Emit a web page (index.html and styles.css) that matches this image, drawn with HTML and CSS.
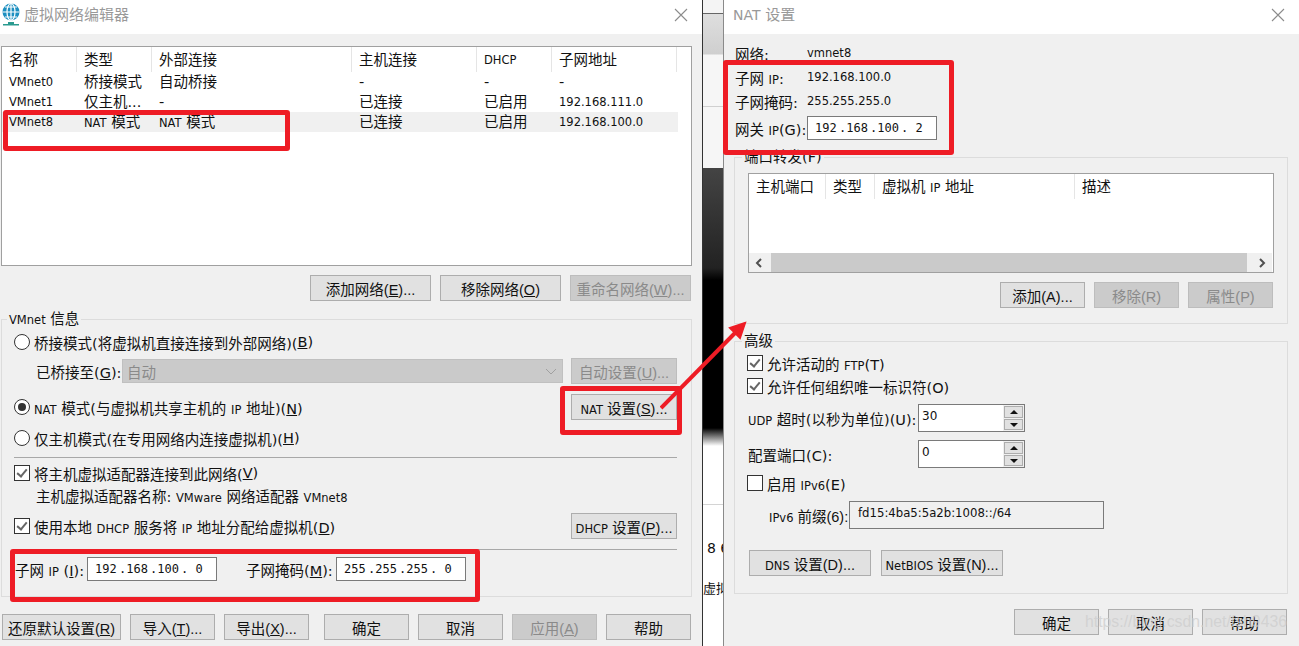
FILE: index.html
```html
<!DOCTYPE html>
<html lang="zh-CN">
<head>
    <meta charset="UTF-8">
    <title>虚拟网络编辑器</title>
    <link rel="stylesheet" href="styles.css">
</head>
<body>

    <div class="backdrop">
        <div class="backdrop-grey"></div>
        <div class="backdrop-black"></div>
        <div class="backdrop-white">
            <span class="backdrop-num">8 6</span>
            <span class="backdrop-text">虚拟</span>
        </div>
    </div>

    <!-- left dialog -->
    <div class="window win-left">
        <div class="titlebar">
            <svg class="app-icon" width="20" height="24" viewBox="0 0 20 24">
                <circle cx="10" cy="10" r="8.5" fill="#1d8fc0"/>
                <path d="M1.5 10h17M10 1.5v17M4 5h12M4 15h12" stroke="#fff" stroke-width="1.2" fill="none"/>
                <ellipse cx="10" cy="10" rx="4" ry="8.5" stroke="#fff" stroke-width="1.2" fill="none"/>
                <path d="M7 20h6v2H7zM2 22h16v1.5H2z" fill="#2a9a8f"/>
            </svg>
            <span class="title">虚拟网络编辑器</span>
            <svg class="close" width="14" height="14" viewBox="0 0 14 14"><path d="M1 1l12 12M13 1L1 13" stroke="#8c8c8c" stroke-width="1.1"/></svg>
        </div>
        <div class="body">
            <div class="listbox net-list">
                <div class="row head">
                    <span class="c1">名称</span><span class="c2">类型</span><span class="c3">外部连接</span><span class="c4">主机连接</span><span class="c5 small">DHCP</span><span class="c6">子网地址</span>
                </div>
                <div class="row">
                    <span class="c1 small">VMnet0</span><span class="c2">桥接模式</span><span class="c3">自动桥接</span><span class="c4">-</span><span class="c5">-</span><span class="c6">-</span>
                </div>
                <div class="row">
                    <span class="c1 small">VMnet1</span><span class="c2">仅主机...</span><span class="c3">-</span><span class="c4">已连接</span><span class="c5">已启用</span><span class="c6 small">192.168.111.0</span>
                </div>
                <div class="row selected">
                    <span class="c1 small">VMnet8</span><span class="c2"><em class="small">NAT</em> 模式</span><span class="c3"><em class="small">NAT</em> 模式</span><span class="c4">已连接</span><span class="c5">已启用</span><span class="c6 small">192.168.100.0</span>
                </div>
            </div>

            <div class="btn-row net-btns">
                <button class="btn w120">添加网络(<u>E</u>)...</button>
                <button class="btn w120">移除网络(<u>O</u>)</button>
                <button class="btn w120 off">重命名网络(<u>W</u>)...</button>
            </div>

            <fieldset class="group vm-group">
                <legend><em class="small">VMnet</em> 信息</legend>
                <div class="opt opt-bridge"><i class="radio"></i>桥接模式(将虚拟机直接连接到外部网络)(<u>B</u>)</div>
                <div class="line bridge-line">
                    <span class="bridge-label">已桥接至(<u>G</u>):</span>
                    <div class="select"><span>自动</span>
                        <svg width="12" height="7" viewBox="0 0 12 7"><path d="M1 1l5 5 5-5" stroke="#a0a0a0" fill="none"/></svg>
                    </div>
                    <button class="btn w106 off">自动设置(<u>U</u>)...</button>
                </div>
                <div class="line nat-line">
                    <div class="opt"><i class="radio on"></i><span><em class="small">NAT</em> 模式(与虚拟机共享主机的 <em class="small">IP</em> 地址)(<u>N</u>)</span></div>
                    <button class="btn w106"><em class="small">NAT</em> 设置(<u>S</u>)...</button>
                </div>
                <div class="opt opt-host"><i class="radio"></i>仅主机模式(在专用网络内连接虚拟机)(<u>H</u>)</div>
                <hr class="sep sep1">
                <div class="opt opt-adapter"><i class="check on"></i>将主机虚拟适配器连接到此网络(<u>V</u>)</div>
                <div class="adapter-name">主机虚拟适配器名称: <em class="small">VMware</em> 网络适配器 <em class="small">VMnet8</em></div>
                <div class="line dhcp-line">
                    <div class="opt"><i class="check on"></i><span>使用本地 <em class="small">DHCP</em> 服务将 <em class="small">IP</em> 地址分配给虚拟机(<u>D</u>)</span></div>
                    <button class="btn w106"><em class="small">DHCP</em> 设置(<u>P</u>)...</button>
                </div>
                <hr class="sep sep2">
                <div class="line subnet-line">
                    <span class="subnet-label">子网 <em class="small">IP</em> (<u>I</u>):</span>
                    <div class="ip"><span>192</span><span>.168</span><span>.100</span><span>. 0</span></div>
                    <span class="mask-label">子网掩码(<u>M</u>):</span>
                    <div class="ip"><span>255</span><span>.255</span><span>.255</span><span>. 0</span></div>
                </div>
            </fieldset>

            <div class="btn-row foot-btns">
                <button class="btn restore">还原默认设置(<u>R</u>)</button>
                <button class="btn w85">导入(<u>T</u>)...</button>
                <button class="btn w85">导出(<u>X</u>)...</button>
                <button class="btn w85 ok">确定</button>
                <button class="btn w85">取消</button>
                <button class="btn w85 off">应用(<u>A</u>)</button>
                <button class="btn w85">帮助</button>
            </div>
        </div>
    </div>

    <!-- right dialog -->
    <div class="window win-right">
        <div class="titlebar">
            <span class="title title-nat"><em class="title-latin">NAT</em> 设置</span>
            <svg class="close" width="14" height="14" viewBox="0 0 14 14"><path d="M1 1l12 12M13 1L1 13" stroke="#8c8c8c" stroke-width="1.1"/></svg>
        </div>
        <div class="body body-nat">
            <div class="info"><span class="info-key">网络:</span><span class="small">vmnet8</span></div>
            <div class="info"><span class="info-key">子网 <em class="small">IP</em>:</span><span class="small">192.168.100.0</span></div>
            <div class="info"><span class="info-key">子网掩码:</span><span class="small">255.255.255.0</span></div>
            <div class="info gateway"><span class="info-key">网关 <em class="small">IP</em>(G):</span>
                <div class="ip"><span>192</span><span>.168</span><span>.100</span><span>. 2</span></div>
            </div>

            <fieldset class="group port-group">
                <legend>端口转发(F)</legend>
                <div class="listbox port-list">
                    <div class="row head port-head">
                        <span class="p1">主机端口</span><span class="p2">类型</span><span class="p3">虚拟机 <em class="small">IP</em> 地址</span><span class="p4">描述</span>
                    </div>
                    <div class="scrollbar">
                        <svg width="8" height="10" viewBox="0 0 8 10"><path d="M6 1L2 5l4 4" stroke="#505050" stroke-width="2" fill="none"/></svg>
                        <div class="thumb"></div>
                        <svg width="8" height="10" viewBox="0 0 8 10"><path d="M2 1l4 4-4 4" stroke="#505050" stroke-width="2" fill="none"/></svg>
                    </div>
                </div>
                <div class="btn-row port-btns">
                    <button class="btn w85">添加(A)...</button>
                    <button class="btn w85 off">移除(R)</button>
                    <button class="btn w85 off">属性(P)</button>
                </div>
            </fieldset>

            <fieldset class="group adv-group">
                <legend>高级</legend>
                <div class="opt opt-ftp"><i class="check on"></i><span>允许活动的 <em class="small">FTP</em>(T)</span></div>
                <div class="opt opt-uid"><i class="check on"></i>允许任何组织唯一标识符(O)</div>
                <div class="line spin-line spin-first">
                    <span class="spin-label"><em class="small">UDP</em> 超时(以秒为单位)(U):</span>
                    <div class="spin"><span class="spin-val">30</span>
                        <div class="spin-btns"><b class="up"></b><b class="down"></b></div>
                    </div>
                </div>
                <div class="line spin-line">
                    <span class="spin-label">配置端口(C):</span>
                    <div class="spin"><span class="spin-val">0</span>
                        <div class="spin-btns"><b class="up"></b><b class="down"></b></div>
                    </div>
                </div>
                <div class="opt opt-v6"><i class="check"></i><span>启用 <em class="small">IPv6</em>(E)</span></div>
                <div class="line v6-line">
                    <span class="v6-label"><em class="small">IPv6</em> 前缀(6):</span>
                    <div class="v6-box">fd15:4ba5:5a2b:1008::/64</div>
                </div>
                <div class="btn-row adv-btns">
                    <button class="btn w122"><em class="small">DNS</em> 设置(D)...</button>
                    <button class="btn w122"><em class="small">NetBIOS</em> 设置(N)...</button>
                </div>
            </fieldset>

            <div class="btn-row nat-foot">
                <button class="btn w85">确定</button>
                <button class="btn w85">取消</button>
                <button class="btn w85">帮助</button>
            </div>
        </div>
    </div>

    <!-- annotations drawn over the screenshot -->
    <div class="mark mark-row"></div>
    <div class="mark mark-nat"></div>
    <div class="mark mark-subnet"></div>
    <div class="mark mark-ip"></div>
    <svg class="arrow" width="100" height="100" viewBox="0 0 100 100">
        <path d="M1 87L75 12" stroke="#ee1c25" stroke-width="4" fill="none"/>
        <path d="M85 2L70 7 80 17z" fill="#ee1c25" stroke="#ee1c25" stroke-width="2"/>
    </svg>
    <div class="watermark">https://blog.csdn.net/fsh9436</div>

</body>
</html>
```
FILE: styles.css
```css
html, body {
    margin: 0;
    padding: 0;
    height: 100%;
    overflow: hidden;
}

body {
    position: relative;
    width: 1299px;
    height: 646px;
    background: #fff;
    font-family: "DejaVu Sans", "Noto Sans CJK SC", sans-serif;
    font-size: 14.5px;
    color: #111;
}

em {
    font-style: normal;
}

u {
    text-underline-offset: 1px;
}

.small {
    font-family: "DejaVu Sans", sans-serif;
    font-size: 11.5px;
}

/* what shows between the two dialogs */
.backdrop {
    position: absolute;
    left: 703px;
    top: 0;
    width: 21px;
    height: 646px;
    display: flex;
    flex-direction: column;
}

.backdrop-grey {
    height: 168px;
    background: linear-gradient(to bottom, #f4f4f4 0, #f4f4f4 13px, #666 13px, #666 14px, #dedede 14px, #cfcfcf 54px, #f6f6f6 55px, #f6f6f6 106px, #d0d0d0 106px, #d0d0d0 107px, #f6f6f6 107px);
}

.backdrop-black {
    height: 278px;
    background: linear-gradient(to bottom, #444 0, #222 100px, #000 112px, #000 260px, #fff 278px);
}

.backdrop-white {
    flex: 1;
    position: relative;
    overflow: hidden;
    background: linear-gradient(to bottom, #fff 0, #fff 58px, #d4d4d4 58px, #d4d4d4 59px, #fff 59px);
}

.backdrop-num {
    position: absolute;
    left: 4px;
    top: 94px;
    font-size: 14px;
    white-space: nowrap;
}

.backdrop-text {
    position: absolute;
    left: 0;
    top: 132px;
    font-size: 13px;
    white-space: nowrap;
}

.window {
    position: absolute;
    top: 0;
    height: 646px;
    display: flex;
    flex-direction: column;
    background: #f0f0f0;
}

.win-left {
    left: 0;
    width: 702px;
    border-right: 1px solid #333;
}

.win-right {
    left: 723px;
    width: 576px;
    border-left: 1px solid #8a8a8a;
    box-sizing: border-box;
}

.titlebar {
    height: 34px;
    flex: none;
    box-sizing: border-box;
    padding-bottom: 7px;
    background: #fff;
    display: flex;
    align-items: center;
    position: relative;
}

.app-icon {
    margin-left: 1px;
    margin-right: 3px;
}

.title {
    font-size: 15px;
    color: #999;
}

.title-nat {
    margin-left: 9px;
}

.title-latin {
    font-size: 14px;
}

.close {
    position: absolute;
    right: 14px;
    top: 8px;
}

.body {
    flex: 1;
    position: relative;
    padding: 12px 0 0 1px;
}

.listbox {
    background: #fff;
    border: 1px solid #a0a0a0;
    box-sizing: border-box;
}

.net-list {
    width: 691px;
    height: 220px;
}

.row {
    display: flex;
    height: 20px;
    line-height: 21px;
    width: 676px;
    white-space: nowrap;
}

.row.head {
    height: 25px;
    line-height: 27px;
}

.row.head > span {
    border-right: 1px solid #e5e5e5;
    height: 25px;
}

.row.selected {
    background: #f0f0f0;
}

.row > span {
    box-sizing: border-box;
    padding-left: 7px;
    flex: none;
}

.c1 { width: 75px; }
.c2 { width: 75px; }
.c3 { width: 200px; }
.c4 { width: 125px; }
.c5 { width: 75px; }
.c6 { width: 125px; }

.btn-row {
    display: flex;
}

.btn {
    height: 26px;
    padding: 0;
    box-sizing: border-box;
    background: #e1e1e1;
    border: 1px solid #adadad;
    font-family: "Liberation Sans", "Noto Sans CJK SC", sans-serif;
    font-size: 14.5px;
    color: #111;
    white-space: nowrap;
    flex: none;
}

.btn.off {
    background: #cbcbcb;
    border-color: #bdbdbd;
    color: #8a8a8a;
}

.w120 { width: 121px; }
.w106 { width: 106px; }
.w85 { width: 85px; }
.w122 { width: 122px; }

.net-btns {
    gap: 9px;
    margin: 9px 0 0 309px;
}

.group {
    margin: 0;
    padding: 0;
    border: 1px solid #dcdcdc;
    box-sizing: border-box;
    position: relative;
}

.group legend {
    padding: 0 2px;
    margin-left: 7px;
    line-height: 16px;
}

.vm-group {
    width: 691px;
    height: 286px;
    margin-top: 10px;
    padding: 0 14px 0 13px;
}

.vm-group legend {
    margin-left: -8px;
}

.adv-group legend {
    margin-left: -6px;
}

.opt {
    display: flex;
    align-items: center;
    height: 20px;
    white-space: nowrap;
}

.radio, .check {
    display: block;
    flex: none;
    box-sizing: border-box;
    width: 16px;
    height: 16px;
    background: #fff;
    border: 1px solid #333;
    margin-left: -1px;
    margin-right: 4px;
    position: relative;
}

.radio {
    border-radius: 50%;
}

.radio.on::after {
    content: "";
    position: absolute;
    left: 3px;
    top: 3px;
    width: 8px;
    height: 8px;
    border-radius: 50%;
    background: #333;
}

.check.on::after {
    content: "";
    position: absolute;
    left: 4px;
    top: 1px;
    width: 4px;
    height: 8px;
    border: solid #666;
    border-width: 0 2px 2px 0;
    transform: rotate(40deg);
}

.line {
    display: flex;
    align-items: center;
    white-space: nowrap;
}

.opt-bridge {
    margin-top: 4px;
}

.bridge-line {
    margin-top: 6px;
    padding-left: 21px;
    height: 26px;
}

.bridge-label {
    width: 86px;
    flex: none;
}

.select {
    width: 441px;
    height: 24px;
    box-sizing: border-box;
    background: #cacaca;
    border: 1px solid #c0c0c0;
    color: #8a8a8a;
    display: flex;
    align-items: center;
    justify-content: space-between;
    padding: 0 5px 0 4px;
    margin-right: 8px;
    flex: none;
}

.nat-line {
    justify-content: space-between;
    margin-top: 10px;
    height: 26px;
}

.opt-host {
    margin-top: 8px;
}

.sep {
    margin: 0 0 0 -1px;
    border: 0;
    height: 1px;
    background: #a8a8a8;
    width: 663px;
}

.sep1 { margin-top: 9px; }

.opt-adapter {
    margin-top: 5px;
}

.adapter-name {
    height: 20px;
    line-height: 20px;
    padding-left: 21px;
    margin-top: 4px;
    white-space: nowrap;
}

.dhcp-line {
    justify-content: space-between;
    margin-top: 6px;
    height: 26px;
}

.sep2 { margin-top: 10px; }

.subnet-line {
    margin-top: 7px;
    height: 24px;
}

.subnet-label {
    width: 72px;
    flex: none;
}

.mask-label {
    margin-left: 29px;
    width: 90px;
    flex: none;
}

.ip {
    box-sizing: border-box;
    width: 130px;
    height: 24px;
    background: #fff;
    border: 1px solid #7a7a7a;
    font-family: "DejaVu Sans Mono", monospace;
    font-size: 12px;
    display: flex;
    align-items: center;
    padding-left: 7px;
    flex: none;
}

.ip span {
    width: 31px;
    flex: none;
    white-space: pre;
}

.ip span:first-child {
    width: 24px;
}

.foot-btns {
    position: absolute;
    left: 2px;
    top: 580px;
    gap: 9px;
}

.restore {
    width: 119px;
}

.foot-btns .ok {
    margin-left: 6px;
}

/* NAT dialog */
.body-nat {
    padding: 0 0 0 11px;
}

.info {
    display: flex;
    align-items: center;
    height: 24px;
}

.info:first-child {
    margin-top: 7px;
}

.info-key {
    width: 72px;
    flex: none;
    white-space: nowrap;
}

.gateway {
    margin-top: 1px;
    height: 28px;
}

.port-group {
    position: absolute;
    left: 10px;
    top: 115px;
    width: 554px;
    height: 175px;
}

.port-list {
    width: 526px;
    height: 100px;
    margin: 8px 0 0 13px;
    position: relative;
}

.port-head {
    width: 420px;
}

.p1 { width: 77px; }
.p2 { width: 49px; }
.p3 { width: 200px; }
.p4 { width: 120px; border-right: 0 !important; }

.scrollbar {
    position: absolute;
    left: 0;
    right: 1px;
    bottom: 0;
    height: 19px;
    background: #f0f0f0;
    display: flex;
    align-items: center;
    justify-content: space-between;
    padding: 0 6px;
    box-sizing: border-box;
}

.thumb {
    position: absolute;
    left: 22px;
    right: 25px;
    top: 0;
    height: 19px;
    background: #cacaca;
}

.port-btns {
    gap: 9px;
    margin: 9px 0 0 265px;
}

.adv-group {
    position: absolute;
    left: 10px;
    top: 299px;
    width: 554px;
    height: 261px;
    padding-left: 13px;
}

.opt-ftp {
    margin-top: 4px;
}

.opt-uid {
    margin-top: 3px;
}

.spin-line {
    height: 28px;
    margin-top: 8px;
}

.spin-first {
    margin-top: 8px;
}

.spin-label {
    width: 170px;
    flex: none;
}

.spin {
    width: 107px;
    height: 28px;
    box-sizing: border-box;
    background: #fff;
    border: 1px solid #7a7a7a;
    display: flex;
    justify-content: space-between;
    flex: none;
}

.spin-val {
    font-family: "DejaVu Sans", sans-serif;
    font-size: 12px;
    padding-left: 3px;
    line-height: 22px;
}

.spin-btns {
    width: 21px;
    background: #f0f0f0;
    display: flex;
    flex-direction: column;
    gap: 1px;
    padding: 1px 1px;
    box-sizing: border-box;
}

.spin-btns b {
    flex: 1;
    background: #e1e1e1;
    border: 1px solid #adadad;
    position: relative;
}

.spin-btns b::after {
    content: "";
    position: absolute;
    left: 5px;
    top: 3px;
    border: 4px solid transparent;
    border-top: 0;
    border-bottom: 4px solid #111;
}

.spin-btns .down::after {
    border-bottom: 0;
    border-top: 4px solid #111;
}

.opt-v6 {
    margin-top: 5px;
}

.v6-line {
    margin-top: 8px;
    padding-left: 21px;
}

.v6-label {
    width: 80px;
    flex: none;
    font-family: "Liberation Sans", "Noto Sans CJK SC", sans-serif;
}

.v6-box {
    width: 255px;
    height: 28px;
    box-sizing: border-box;
    background: #f0f0f0;
    border: 1px solid #7a7a7a;
    font-family: "DejaVu Sans", sans-serif;
    font-size: 11.7px;
    padding-left: 8px;
    line-height: 23px;
}

.adv-btns {
    gap: 10px;
    margin-top: 21px;
    padding-left: 1px;
}

.nat-foot {
    position: absolute;
    left: 290px;
    top: 575px;
    gap: 9px;
}

/* red boxes and arrow */
.mark {
    position: absolute;
    box-sizing: border-box;
    border: 5px solid #ee1c25;
    border-radius: 3px;
}

.mark-row { left: 3px; top: 110px; width: 287px; height: 41px; }
.mark-nat { left: 560px; top: 386px; width: 122px; height: 49px; }
.mark-subnet { left: 10px; top: 549px; width: 470px; height: 53px; }
.mark-ip { left: 723px; top: 60px; width: 231px; height: 95px; }

.arrow {
    position: absolute;
    left: 660px;
    top: 321px;
}

.watermark {
    position: absolute;
    left: 1085px;
    top: 613px;
    font-family: "Liberation Sans", sans-serif;
    font-size: 15.8px;
    color: rgba(205, 205, 205, 0.75);
    white-space: nowrap;
}
```
